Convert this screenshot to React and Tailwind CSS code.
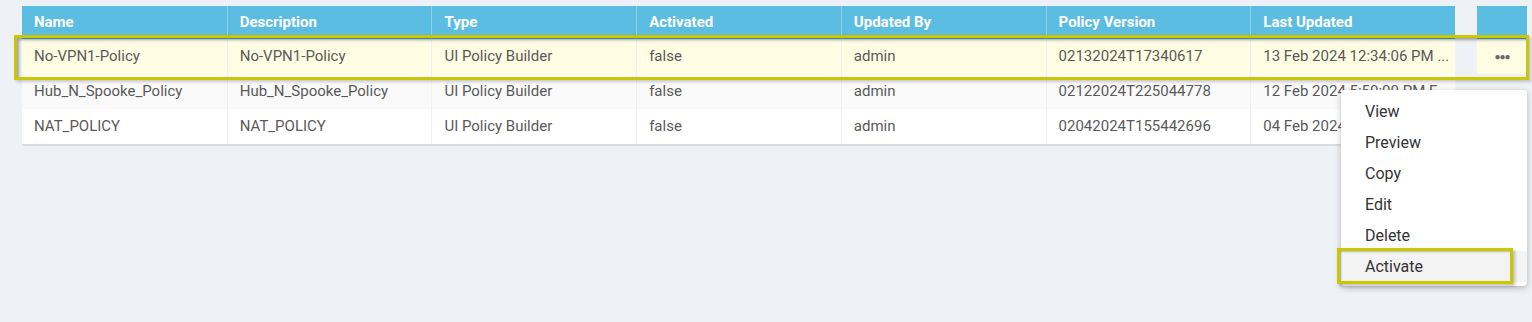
import React from "react";

const COLUMNS = ["Name", "Description", "Type", "Activated", "Updated By", "Policy Version", "Last Updated"];

const ROWS = [
  ["No-VPN1-Policy", "No-VPN1-Policy", "UI Policy Builder", "false", "admin", "02132024T17340617", "13 Feb 2024 12:34:06 PM ..."],
  ["Hub_N_Spooke_Policy", "Hub_N_Spooke_Policy", "UI Policy Builder", "false", "admin", "02122024T225044778", "12 Feb 2024 5:50:00 PM E..."],
  ["NAT_POLICY", "NAT_POLICY", "UI Policy Builder", "false", "admin", "02042024T155442696", "04 Feb 2024 3:54:42 PM ..."],
];

const MENU = ["View", "Preview", "Copy", "Edit", "Delete", "Activate"];

const rowBg = ["bg-[#fffde3]", "bg-[#fafafa]", "bg-white"];

export default function App() {
  return (
    <div className="relative h-[322px] w-full overflow-hidden bg-[#eef1f6] font-['Roboto',sans-serif]">
      <div className="flex gap-[22px] pl-[22px] pt-[6px]">
        {/* Main table */}
        <div className="w-[1433px] border-b-2 border-[#d9dbde]">
          <div className="grid h-[33px] grid-cols-7 bg-[#5bbde1]">
            {COLUMNS.map((c, i) => (
              <div
                key={c}
                className={`flex items-center px-3 text-[15px] font-bold text-white ${i > 0 ? "border-l border-[#8dd1ec]" : ""}`}
              >
                {c}
              </div>
            ))}
          </div>
          {ROWS.map((row, r) => (
            <div key={r} className={`grid h-[35px] grid-cols-7 ${rowBg[r]}`}>
              {row.map((cell, i) => (
                <div
                  key={i}
                  className={`flex min-w-0 items-center pl-3 text-[15px] text-[#5a5a5a] ${i > 0 ? "border-l border-[#f0f0f0]" : ""} ${i === 6 ? "pr-0" : "pr-3"}`}
                >
                  <span className="whitespace-nowrap">{cell}</span>
                </div>
              ))}
            </div>
          ))}
        </div>

        {/* Actions column */}
        <div className="w-[50px]">
          <div className="h-[33px] bg-[#5bbde1]" />
          <div className="flex h-[35px] items-center justify-center bg-[#fffde3] text-[#6a6a6a]">
            <span className="text-[10px] tracking-[-1px]">●●●</span>
          </div>
        </div>
      </div>

      {/* Highlight around selected row */}
      <div className="pointer-events-none absolute left-[14px] top-[35px] h-[45px] w-[1515px] border-[3px] border-[#c8c900] shadow-[inset_2px_2px_3px_rgba(0,0,0,0.35),2px_2px_3px_rgba(0,0,0,0.2)]" />

      {/* Context menu */}
      <div className="absolute left-[1341px] top-[90px] w-[186px] rounded-[4px] bg-white pb-[4px] pt-[6px] shadow-[0_2px_6px_rgba(0,0,0,0.25)]">
        {MENU.map((m) => (
          <div
            key={m}
            className={`flex h-[31px] items-center pl-[24px] text-[16px] text-[#333] ${m === "Activate" ? "bg-[#f3f3f3]" : ""}`}
          >
            {m}
          </div>
        ))}
      </div>

      {/* Highlight around Activate */}
      <div className="pointer-events-none absolute left-[1337px] top-[248px] h-[36px] w-[176px] border-[3px] border-[#c8c900] shadow-[inset_1px_1px_2px_rgba(0,0,0,0.25),2px_2px_3px_rgba(0,0,0,0.25)]" />
    </div>
  );
}
